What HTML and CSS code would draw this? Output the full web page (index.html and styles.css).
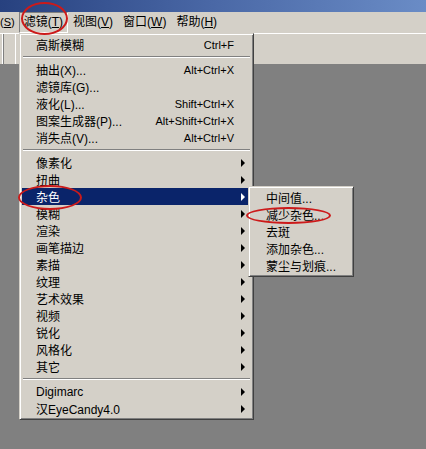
FILE: index.html
```html
<!DOCTYPE html>
<html lang="zh-CN">

<head>
    <meta charset="UTF-8">
    <title>滤镜 - 杂色</title>
    <link rel="stylesheet" href="styles.css">
</head>

<body>
    <div class="titlebar"></div>

    <div class="menubar">
        <span class="menu-title cut">(<u>S</u>)</span>
        <span class="menu-title open">滤镜(<u>T</u>)</span>
        <span class="menu-title">视图(<u>V</u>)</span>
        <span class="menu-title">窗口(<u>W</u>)</span>
        <span class="menu-title">帮助(<u>H</u>)</span>
    </div>

    <div class="toolbar">
        <div class="field"></div>
    </div>

    <div class="workspace"></div>

    <!-- filter dropdown -->
    <div class="dropdown filter-menu">
        <div class="item"><span class="label">高斯模糊</span><span class="key">Ctrl+F</span><span class="arrow"></span></div>
        <div class="sep"></div>
        <div class="item"><span class="label">抽出(X)...</span><span class="key">Alt+Ctrl+X</span><span class="arrow"></span></div>
        <div class="item"><span class="label">滤镜库(G)...</span><span class="key"></span><span class="arrow"></span></div>
        <div class="item"><span class="label">液化(L)...</span><span class="key">Shift+Ctrl+X</span><span class="arrow"></span></div>
        <div class="item"><span class="label">图案生成器(P)...</span><span class="key">Alt+Shift+Ctrl+X</span><span class="arrow"></span></div>
        <div class="item"><span class="label">消失点(V)...</span><span class="key">Alt+Ctrl+V</span><span class="arrow"></span></div>
        <div class="sep"></div>
        <div class="item sub"><span class="label">像素化</span><span class="arrow"></span></div>
        <div class="item sub"><span class="label">扭曲</span><span class="arrow"></span></div>
        <div class="item sub active"><span class="label">杂色</span><span class="arrow"></span></div>
        <div class="item sub"><span class="label">模糊</span><span class="arrow"></span></div>
        <div class="item sub"><span class="label">渲染</span><span class="arrow"></span></div>
        <div class="item sub"><span class="label">画笔描边</span><span class="arrow"></span></div>
        <div class="item sub"><span class="label">素描</span><span class="arrow"></span></div>
        <div class="item sub"><span class="label">纹理</span><span class="arrow"></span></div>
        <div class="item sub"><span class="label">艺术效果</span><span class="arrow"></span></div>
        <div class="item sub"><span class="label">视频</span><span class="arrow"></span></div>
        <div class="item sub"><span class="label">锐化</span><span class="arrow"></span></div>
        <div class="item sub"><span class="label">风格化</span><span class="arrow"></span></div>
        <div class="item sub"><span class="label">其它</span><span class="arrow"></span></div>
        <div class="sep"></div>
        <div class="item sub"><span class="label">Digimarc</span><span class="arrow"></span></div>
        <div class="item sub"><span class="label">汉EyeCandy4.0</span><span class="arrow"></span></div>
    </div>

    <!-- noise submenu -->
    <div class="dropdown noise-menu">
        <div class="item"><span class="label">中间值...</span></div>
        <div class="item"><span class="label">减少杂色...</span></div>
        <div class="item"><span class="label">去斑</span></div>
        <div class="item"><span class="label">添加杂色...</span></div>
        <div class="item"><span class="label">蒙尘与划痕...</span></div>
    </div>

    <!-- red marks drawn over the screenshot -->
    <div class="mark mark-filter"></div>
    <div class="mark mark-noise"></div>
    <div class="mark mark-reduce"></div>
</body>

</html>
```

FILE: styles.css
```css
:root {
    --face: #d4d0c8;
    --shadow: #808080;
    --dark: #404040;
    --select: #0a246a;
    --mark: #cc1a1a;
}

* {
    margin: 0;
    padding: 0;
    box-sizing: border-box;
}

body {
    width: 426px;
    height: 449px;
    overflow: hidden;
    position: relative;
    background-color: var(--shadow);
    font-family: "Liberation Sans", "Noto Sans CJK SC", sans-serif;
    font-size: 12px;
    color: #000;
}

.titlebar {
    height: 12px;
    background: linear-gradient(to right, #27417f, #4a68a6 50%, #6a8cc6);
}

.menubar {
    height: 21px;
    display: flex;
    align-items: center;
    background-color: var(--face);
}

.menu-title {
    padding: 0 4px;
    line-height: 19px;
    border: 1px solid transparent;
}

.menu-title.cut {
    padding: 0;
    border: none;
    margin: 0;
    font-size: 11px;
}

.menu-title.open {
    margin-left: 4px;
    border-color: var(--shadow) #fff #fff var(--shadow);
}

.toolbar {
    height: 32px;
    background-color: var(--face);
    border-top: 1px solid #fff;
    border-bottom: 1px solid var(--shadow);
    display: flex;
}

.field {
    width: 14px;
    margin-left: 2px;
    border-left: 1px solid #fff;
    border-right: 1px solid #fff;
    box-shadow: inset 1px 0 var(--shadow);
}

.workspace {
    flex: 1;
}

/* dropdown menus */

.dropdown {
    position: absolute;
    background-color: var(--face);
    border: 1px solid;
    border-color: var(--face) var(--dark) var(--dark) var(--face);
    box-shadow: inset 1px 1px #fff, inset -1px -1px var(--shadow);
    padding: 2px;
}

.filter-menu {
    left: 19px;
    top: 33px;
    width: 235px;
}

.noise-menu {
    left: 248px;
    top: 186px;
    width: 106px;
}

.item {
    height: 17px;
    display: flex;
    align-items: center;
    padding-left: 14px;
    white-space: nowrap;
}

.noise-menu .item {
    padding-left: 15px;
}

.label {
    flex: 1;
}

.key {
    font-size: 11px;
}

.arrow {
    width: 17px;
    height: 8px;
    position: relative;
}

.sub .arrow::after {
    content: "";
    position: absolute;
    left: 7px;
    top: 0;
    border-left: 4px solid #000;
    border-top: 4px solid transparent;
    border-bottom: 4px solid transparent;
}

.item.active {
    background-color: var(--select);
    color: #fff;
}

.item.active .arrow::after {
    border-left-color: #fff;
}

.sep {
    height: 8px;
    margin: 0 1px;
    position: relative;
}

.sep::after {
    content: "";
    position: absolute;
    left: 0;
    right: 0;
    top: 3px;
    border-top: 1px solid var(--shadow);
    border-bottom: 1px solid #fff;
}

/* hand drawn ellipses */

.mark {
    position: absolute;
    border: 2px solid var(--mark);
    border-radius: 50%;
}

.mark-filter {
    left: 21px;
    top: 2px;
    width: 47px;
    height: 33px;
}

.mark-noise {
    left: 18px;
    top: 185px;
    width: 64px;
    height: 25px;
}

.mark-reduce {
    left: 246px;
    top: 207px;
    width: 85px;
    height: 17px;
}
```
